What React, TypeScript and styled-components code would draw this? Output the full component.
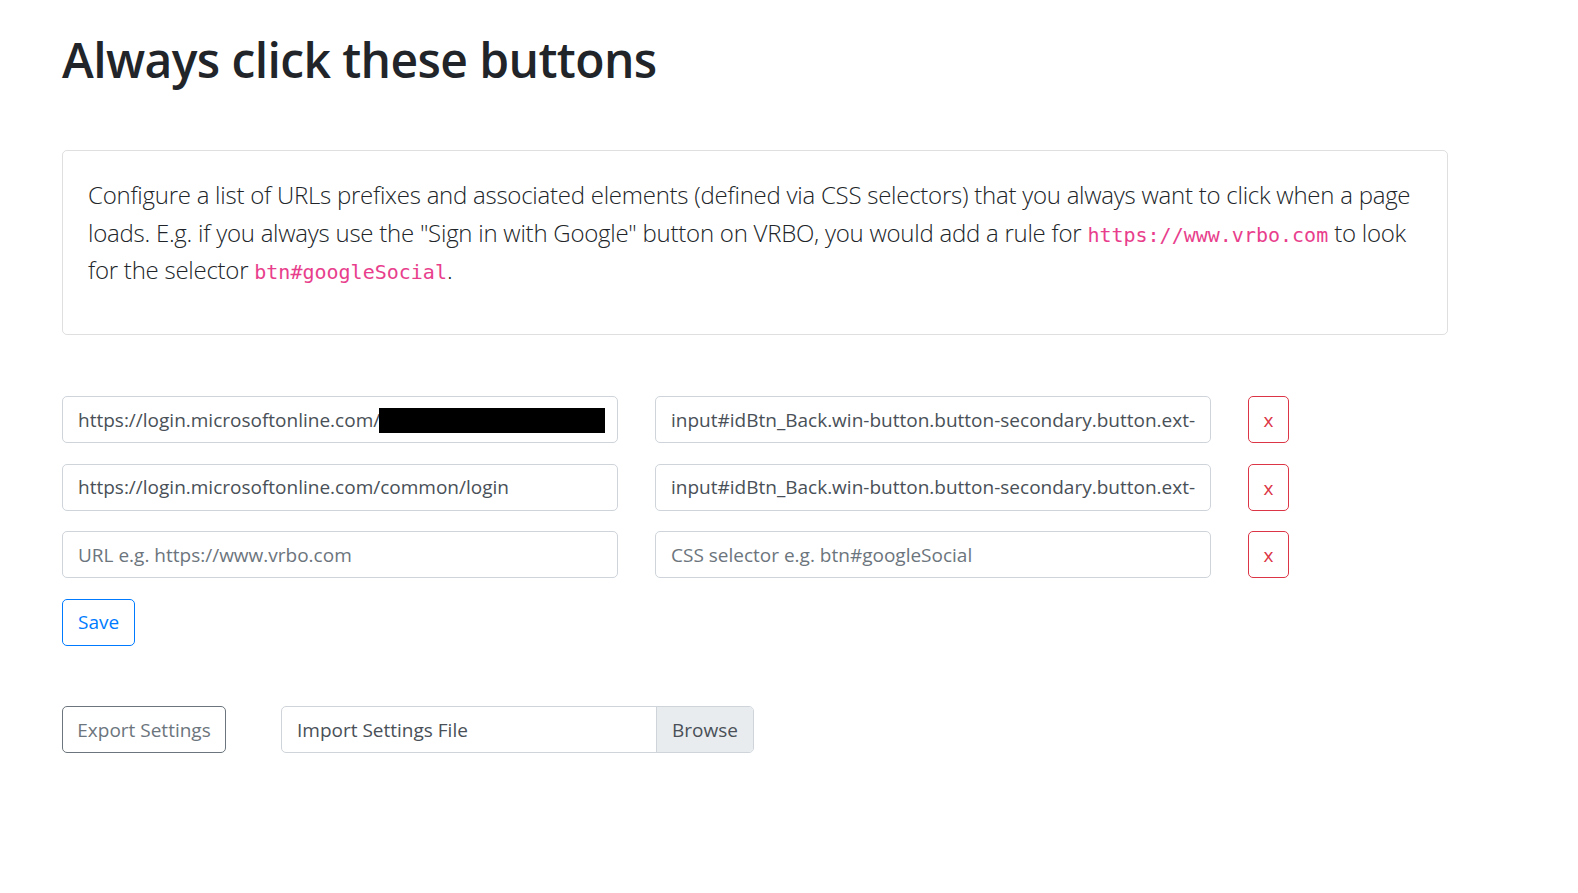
import React from "react";
import styled, { createGlobalStyle } from "styled-components";

const GlobalStyle = createGlobalStyle`
  *, *::before, *::after { box-sizing: border-box; }
  html, body { margin: 0; padding: 0; background: #fff; }
  body {
    font-family: "Open Sans", "Noto Sans", sans-serif;
    color: #212529;
    font-size: 19px;
  }
`;

const Page = styled.main`
  padding: 30px 0 80px 62px;
  width: 1448px;
`;

const Title = styled.h1`
  margin: 0;
  font-size: 48px;
  line-height: 60px;
  font-weight: 600;
  letter-spacing: -0.6px;
  color: #212529;
`;

const Card = styled.section`
  margin-top: 60px;
  width: 1386px;
  border: 1px solid rgba(0, 0, 0, 0.125);
  border-radius: 5px;
  padding: 25px;
`;

const Lead = styled.p`
  margin: 0 0 20px;
  font-size: 24px;
  font-weight: 300;
  line-height: 37.5px;
  letter-spacing: -0.25px;
`;

const Code = styled.code`
  font-family: "DejaVu Sans Mono", "Liberation Mono", monospace;
  font-size: 20px;
  line-height: 1;
  letter-spacing: 0;
  color: #e83e8c;
`;

const Rules = styled.div`
  margin-top: 61.5px;
  display: grid;
  grid-template-columns: 555.5px 555.5px auto;
  column-gap: 37.5px;
  row-gap: 20.5px;
  align-items: start;
`;

const Field = styled.div`
  position: relative;
`;

const Input = styled.input`
  display: block;
  width: 100%;
  height: 47px;
  padding: 7.5px 15px;
  font-family: "Open Sans", "Noto Sans", sans-serif;
  font-size: 19px;
  line-height: 30px;
  color: #495057;
  background: #fff;
  border: 1px solid #ced4da;
  border-radius: 5px;
  outline: none;
  &::placeholder {
    color: #6c757d;
    opacity: 1;
  }
`;

const Redaction = styled.span`
  position: absolute;
  left: 317px;
  top: 12px;
  width: 226px;
  height: 25px;
  background: #000;
`;

type Variant = "danger" | "primary" | "secondary";
const variantColor: Record<Variant, string> = {
  danger: "#dc3545",
  primary: "#007bff",
  secondary: "#6c757d",
};

const OutlineButton = styled.button<{ $variant: Variant; $full?: boolean }>`
  display: inline-flex;
  align-items: center;
  justify-content: center;
  height: 47px;
  width: ${(p) => (p.$full ? "100%" : "auto")};
  padding: 7.5px ${(p) => (p.$full ? "0" : "15px")};
  font-family: "Open Sans", "Noto Sans", sans-serif;
  font-size: 19px;
  line-height: 30px;
  font-weight: 400;
  white-space: nowrap;
  color: ${(p) => variantColor[p.$variant]};
  background: transparent;
  border: 1px solid ${(p) => variantColor[p.$variant]};
  border-radius: 5px;
  cursor: pointer;
`;

const RemoveButton = styled(OutlineButton)`
  width: 41px;
  padding: 8px 0 7px;
`;

const SaveRow = styled.div`
  margin-top: 20.5px;
`;

const Tools = styled.div`
  margin-top: 60.5px;
  display: grid;
  grid-template-columns: 164px 473px;
  column-gap: 55px;
`;

const FileBox = styled.label`
  position: relative;
  display: flex;
  height: 47px;
  border: 1px solid #ced4da;
  border-radius: 5px;
  overflow: hidden;
  color: #495057;
  font-size: 19px;
  line-height: 30px;
  cursor: pointer;
`;

const HiddenFile = styled.input`
  position: absolute;
  opacity: 0;
  width: 0;
  height: 0;
`;

const FileName = styled.span`
  flex: 1;
  padding: 7.5px 15px;
`;

const Browse = styled.span`
  padding: 7.5px 15px;
  background: #e9ecef;
  border-left: 1px solid #ced4da;
`;

const rules = [
  { url: "https://login.microsoftonline.com/", selector: "input#idBtn_Back.win-button.button-secondary.button.ext-button", redacted: true },
  { url: "https://login.microsoftonline.com/common/login", selector: "input#idBtn_Back.win-button.button-secondary.button.ext-button", redacted: false },
  { url: "", selector: "", redacted: false },
];

export default function App() {
  return (
    <Page>
      <GlobalStyle />
      <Title>Always click these buttons</Title>
      <Card>
        <Lead>
          Configure a list of URLs prefixes and associated elements (defined via CSS selectors) that you always want to click
          when a page loads. E.g. if you always use the "Sign in with Google" button on VRBO, you would add a rule for{" "}
          <Code>https://www.vrbo.com</Code> to look for the selector <Code>btn#googleSocial</Code>.
        </Lead>
      </Card>
      <Rules>
        {rules.map((r, i) => (
          <React.Fragment key={i}>
            <Field>
              <Input defaultValue={r.url} placeholder="URL e.g. https://www.vrbo.com" />
              {r.redacted && <Redaction />}
            </Field>
            <Field>
              <Input defaultValue={r.selector} placeholder="CSS selector e.g. btn#googleSocial" />
            </Field>
            <RemoveButton $variant="danger">x</RemoveButton>
          </React.Fragment>
        ))}
      </Rules>
      <SaveRow>
        <OutlineButton $variant="primary">Save</OutlineButton>
      </SaveRow>
      <Tools>
        <OutlineButton $variant="secondary" $full>
          Export Settings
        </OutlineButton>
        <FileBox>
          <HiddenFile type="file" />
          <FileName>Import Settings File</FileName>
          <Browse>Browse</Browse>
        </FileBox>
      </Tools>
    </Page>
  );
}
